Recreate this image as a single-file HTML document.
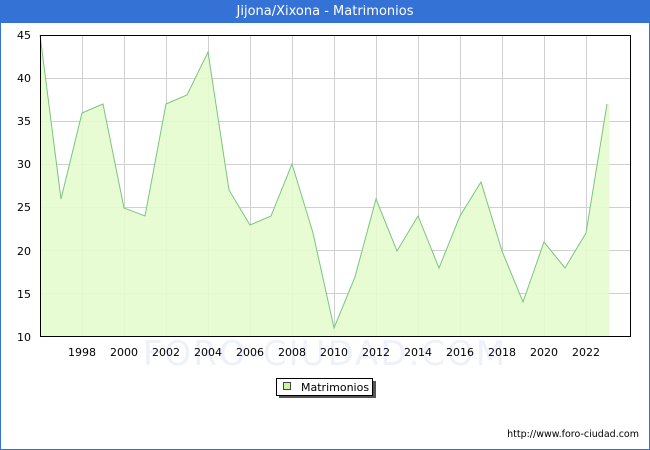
<!DOCTYPE html>
<html><head><meta charset="utf-8"><style>
html,body{margin:0;padding:0;background:#fff}
body{width:650px;height:450px;position:relative;overflow:hidden;font-family:"DejaVu Sans","Liberation Sans",sans-serif}
.frame{position:absolute;left:0;top:0;width:648px;height:448px;border:1px solid #3472d6}
.hdr{position:absolute;left:0;top:0;width:650px;height:23px;background:#3472d6;color:#fff;font-size:13px;text-align:center;line-height:23px}
</style></head><body>
<div class="frame"></div>
<div class="hdr">Jijona/Xixona - Matrimonios</div>
<svg width="650" height="450" style="position:absolute;left:0;top:0" font-family="DejaVu Sans, Liberation Sans, sans-serif">
<text x="325" y="365" font-size="34" fill="#eef0fb" text-anchor="middle" letter-spacing="2">FORO-CIUDAD.COM</text>
<g stroke="#d0d0d0" stroke-width="1">
<line x1="40" y1="78.5" x2="631" y2="78.5"/><line x1="40" y1="121.5" x2="631" y2="121.5"/><line x1="40" y1="164.5" x2="631" y2="164.5"/><line x1="40" y1="207.5" x2="631" y2="207.5"/><line x1="40" y1="250.5" x2="631" y2="250.5"/><line x1="40" y1="293.5" x2="631" y2="293.5"/>
<line x1="82.5" y1="35" x2="82.5" y2="337"/><line x1="124.5" y1="35" x2="124.5" y2="337"/><line x1="166.5" y1="35" x2="166.5" y2="337"/><line x1="208.5" y1="35" x2="208.5" y2="337"/><line x1="250.5" y1="35" x2="250.5" y2="337"/><line x1="292.5" y1="35" x2="292.5" y2="337"/><line x1="334.5" y1="35" x2="334.5" y2="337"/><line x1="376.5" y1="35" x2="376.5" y2="337"/><line x1="418.5" y1="35" x2="418.5" y2="337"/><line x1="460.5" y1="35" x2="460.5" y2="337"/><line x1="502.5" y1="35" x2="502.5" y2="337"/><line x1="544.5" y1="35" x2="544.5" y2="337"/><line x1="586.5" y1="35" x2="586.5" y2="337"/>
</g>
<polygon fill="#e6fccf" fill-opacity="0.9" points="40,337 40,35 61,199 82,113 103,104 124,208 145,216 166,104 187,95 208,52 229,190 250,225 271,216 292,164 313,233 334,328 355,277 376,199 397,251 418,216 439,268 460,216 481,182 502,251 523,302 544,242 565,268 586,233 607,104 609,104 609,337"/>
<polyline fill="none" stroke="#7ac47f" stroke-width="1" points="40,35 61,199 82,113 103,104 124,208 145,216 166,104 187,95 208,52 229,190 250,225 271,216 292,164 313,233 334,328 355,277 376,199 397,251 418,216 439,268 460,216 481,182 502,251 523,302 544,242 565,268 586,233 607,104"/>
<rect x="40.5" y="35.5" width="590" height="301" fill="none" stroke="#000" stroke-width="1"/>
<g font-size="11" fill="#000" text-anchor="end">
<text x="31" y="39">45</text><text x="31" y="82">40</text><text x="31" y="125">35</text><text x="31" y="168">30</text><text x="31" y="211">25</text><text x="31" y="255">20</text><text x="31" y="298">15</text><text x="31" y="341">10</text>
</g>
<g font-size="11" fill="#000" text-anchor="middle">
<text x="82" y="356">1998</text><text x="124" y="356">2000</text><text x="166" y="356">2002</text><text x="208" y="356">2004</text><text x="250" y="356">2006</text><text x="292" y="356">2008</text><text x="334" y="356">2010</text><text x="376" y="356">2012</text><text x="418" y="356">2014</text><text x="460" y="356">2016</text><text x="502" y="356">2018</text><text x="544" y="356">2020</text><text x="586" y="356">2022</text>
</g>
<rect x="279" y="381" width="97" height="17" fill="#555"/>
<rect x="276.5" y="378.5" width="96" height="17" fill="#fff" stroke="#000" stroke-width="1"/>
<rect x="283.5" y="382.5" width="7" height="7" fill="#ccf5a0" stroke="#444" stroke-width="1"/>
<text x="301" y="391" font-size="11" fill="#000">Matrimonios</text>
<text x="639" y="437" font-size="9.5" fill="#000" text-anchor="end">http://www.foro-ciudad.com</text>
</svg>
</body></html>
